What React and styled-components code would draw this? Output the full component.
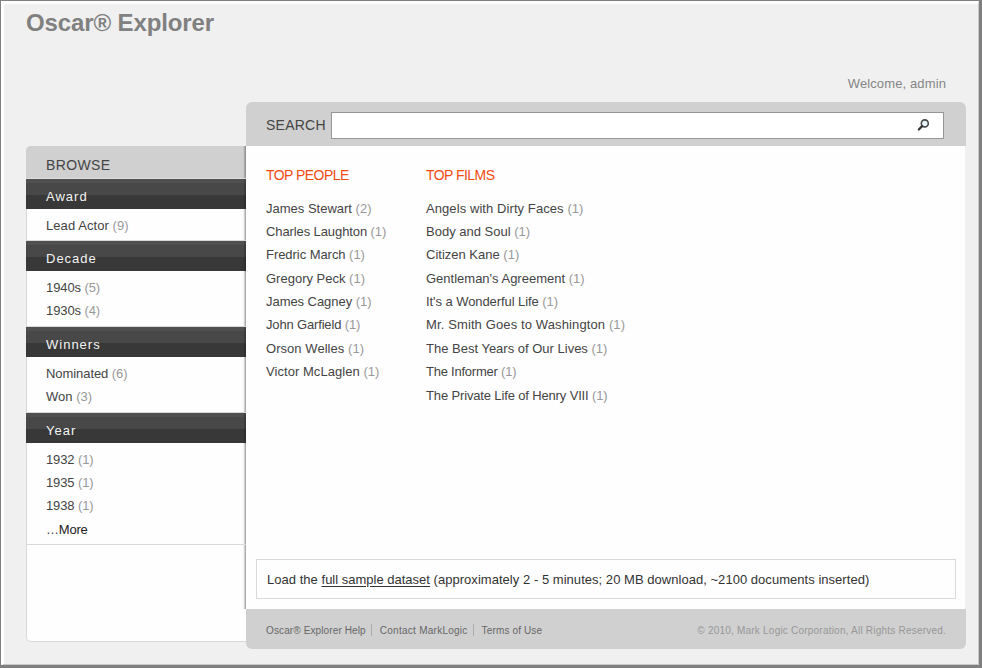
import React from "react";
import styled, { createGlobalStyle } from "styled-components";

const GlobalStyle = createGlobalStyle`
  *, *::before, *::after { box-sizing: border-box; }
  body { margin: 0; background: #f0f0f0; overflow: hidden; }
  ul { list-style: none; margin: 0; padding: 0; }
  h1, h2, p { margin: 0; font-weight: normal; }
`;

const Frame = styled.div`
  height: 668px;
  border: solid #808080;
  border-width: 1px 3px 3px 1px;
  font-family: "Liberation Sans", Arial, sans-serif;
  font-size: 13px;
  color: #444;
`;

const Page = styled.div`
  height: 664px;
  border: solid #fff;
  border-width: 3px 1px 1px 3px;
  border-right-color: #c8c8c8;
  border-bottom-color: #c8c8c8;
  background: #f0f0f0;
  padding-left: 22px;
`;

const Header = styled.header`
  height: 98px;
  width: 940px;
  display: flex;
  flex-direction: column;
  justify-content: space-between;
`;

const Title = styled.h1`
  font-size: 24px;
  line-height: 28px;
  margin-top: 5px;
  font-weight: bold;
  color: #808080;
  letter-spacing: -0.12px;
`;

const Welcome = styled.p`
  align-self: flex-end;
  margin: 0 20px 9px 0;
  line-height: 18px;
  letter-spacing: 0.12px;
  color: #858585;
`;

const Columns = styled.div`
  display: flex;
  width: 940px;
`;

const Sidebar = styled.aside`
  width: 220px;
  height: 496px;
  margin-top: 44px;
  border: 1px solid #d9d9d9;
  border-right: 0;
  border-top: 0;
  border-radius: 5px 0 0 5px;
  background: #fefefe;
`;

const SidebarShade = styled.div`
  height: 463px;
  margin-left: -1px;
  border-radius: 5px 0 0 0;
  overflow: hidden;
  background: linear-gradient(to right, transparent calc(100% - 3px), #e6e6e6 calc(100% - 2px), #969696);
`;

const Browse = styled.div`
  height: 33px;
  padding: 10px 20px 0;
  line-height: 18px;
  font-size: 14px;
  letter-spacing: 0.35px;
  background: linear-gradient(to right, #d0d0d0 calc(100% - 3px), #bbb calc(100% - 2px), #858585);
  border-bottom: 1px solid #dedede;
`;

const FacetTitle = styled.h2`
  height: 30px;
  padding: 9px 20px 0;
  font-size: 13px;
  line-height: 18px;
  letter-spacing: 1px;
  color: #f4f4f4;
  background:
    linear-gradient(to right, transparent calc(100% - 3px), rgba(0, 0, 0, 0.25)),
    linear-gradient(#505050 0, #505050 4px, #484848 4px, #484848 16px, #383838 16px);
`;

const FacetList = styled.ul`
  height: ${(p) => p.$height}px;
  margin-left: 1px;
  padding: 4.52px 0 0 19px;
  border-bottom: 1px solid #d9d9d9;
`;

const Item = styled.li`
  height: 23.39px;
  line-height: 23px;
  white-space: nowrap;
  letter-spacing: ${(p) => p.$track || 0}px;
`;

const Count = styled.span`
  color: #999;
`;

const More = styled.span`
  color: #222;
`;

const Main = styled.main`
  width: 720px;
  height: 547px;
  display: flex;
  flex-direction: column;
  border-radius: 6px;
  overflow: hidden;
`;

const SearchBar = styled.form`
  height: 44px;
  padding: 1px 22px 0 20px;
  display: flex;
  align-items: center;
  background: #d0d0d0;
`;

const SearchLabel = styled.label`
  width: 65px;
  font-size: 14px;
  letter-spacing: 0.25px;
`;

const SearchBox = styled.div`
  width: 613px;
  height: 27px;
  margin-top: 1px;
  display: flex;
  align-items: center;
  justify-content: flex-end;
  padding-right: 13px;
  border: 1px solid #969696;
  background: #fff;
`;

const SearchInput = styled.input`
  flex: 1;
  min-width: 0;
  border: 0;
  outline: 0;
  background: transparent;
  font: inherit;
`;

const Content = styled.div`
  height: 463px;
  margin-right: 1px;
  padding: 20px 9px 10px 10px;
  background: #fefefe;
  display: flex;
  flex-direction: column;
  justify-content: space-between;
`;

const Lists = styled.div`
  display: grid;
  grid-template-columns: 160px 240px;
  padding-left: 10px;
`;

const ListTitle = styled.h2`
  font-size: 14px;
  line-height: 18px;
  letter-spacing: -0.55px;
  margin-bottom: 12.52px;
  color: #f04b10;
`;

const Notice = styled.p`
  height: 40px;
  padding: 0 10px;
  border: 1px solid #dadada;
  line-height: 40px;
  letter-spacing: 0.035px;
  color: #333;
`;

const Link = styled.a`
  color: inherit;
  letter-spacing: 0;
  text-decoration: underline;
  text-underline-offset: 2px;
`;

const Footer = styled.footer`
  height: 40px;
  padding: 2px 20px 0;
  display: flex;
  align-items: center;
  background: #d0d0d0;
  font-size: 10px;
  color: #666;
`;

const FooterLink = styled.span`
  height: 12px;
  line-height: 13px;
  padding-right: ${(p) => (p.$last ? 0 : 5)}px;
  margin-right: ${(p) => (p.$last ? 0 : 8)}px;
  border-right: ${(p) => (p.$last ? "0" : "1px solid #aaa")};
  letter-spacing: ${(p) => p.$track || 0}px;
`;

const Copyright = styled.span`
  margin-left: auto;
  color: #979797;
  letter-spacing: 0.215px;
`;

const facets = [
  { name: "Award", height: 32, items: [["Lead Actor", 9, 0.07]] },
  { name: "Decade", height: 56, items: [["1940s", 5, -0.1], ["1930s", 4, -0.1]] },
  { name: "Winners", height: 56, items: [["Nominated", 6, -0.07], ["Won", 3]] },
  {
    name: "Year",
    height: 102,
    items: [["1932", 1, -0.12], ["1935", 1, -0.12], ["1938", 1, -0.12]],
    more: true,
  },
];

const people = [
  ["James Stewart", 2],
  ["Charles Laughton", 1, -0.1],
  ["Fredric March", 1, -0.05],
  ["Gregory Peck", 1],
  ["James Cagney", 1, -0.05],
  ["John Garfield", 1, -0.16],
  ["Orson Welles", 1, 0.05],
  ["Victor McLaglen", 1, 0.05],
];

const films = [
  ["Angels with Dirty Faces", 1, 0.08],
  ["Body and Soul", 1],
  ["Citizen Kane", 1],
  ["Gentleman's Agreement", 1],
  ["It's a Wonderful Life", 1, -0.07],
  ["Mr. Smith Goes to Washington", 1, 0.12],
  ["The Best Years of Our Lives", 1],
  ["The Informer", 1, -0.23],
  ["The Private Life of Henry VIII", 1, -0.145],
];

function Items({ rows }) {
  return rows.map(([name, count, track]) => (
    <Item key={name} $track={track}>
      {name} <Count>({count})</Count>
    </Item>
  ));
}

function SearchIcon() {
  return (
    <svg width="13" height="13" viewBox="0 0 13 13" fill="none" aria-label="Search">
      <circle cx="7.8" cy="4.4" r="3.5" fill="#e6f6fa" stroke="#484848" strokeWidth="1.6" />
      <path d="M5.2 7.1L1.8 10.5" stroke="#333" strokeWidth="2.2" strokeLinecap="round" />
    </svg>
  );
}

export default function App() {
  return (
    <Frame>
      <GlobalStyle />
      <Page>
        <Header>
          <Title>Oscar® Explorer</Title>
          <Welcome>Welcome, admin</Welcome>
        </Header>
        <Columns>
          <Sidebar>
            <SidebarShade>
              <Browse>BROWSE</Browse>
              {facets.map((f) => (
                <React.Fragment key={f.name}>
                  <FacetTitle>{f.name}</FacetTitle>
                  <FacetList $height={f.height}>
                    <Items rows={f.items} />
                    {f.more && (
                      <Item $track={-0.2}>
                        …<More>More</More>
                      </Item>
                    )}
                  </FacetList>
                </React.Fragment>
              ))}
            </SidebarShade>
          </Sidebar>
          <Main>
            <SearchBar>
              <SearchLabel htmlFor="q">SEARCH</SearchLabel>
              <SearchBox>
                <SearchInput id="q" />
                <SearchIcon />
              </SearchBox>
            </SearchBar>
            <Content>
              <Lists>
                <section>
                  <ListTitle>TOP PEOPLE</ListTitle>
                  <ul><Items rows={people} /></ul>
                </section>
                <section>
                  <ListTitle>TOP FILMS</ListTitle>
                  <ul><Items rows={films} /></ul>
                </section>
              </Lists>
              <Notice>
                Load the <Link>full sample dataset</Link> (approximately 2 - 5 minutes; 20 MB download, ~2100 documents inserted)
              </Notice>
            </Content>
            <Footer>
              <FooterLink $track={0.12}>Oscar® Explorer Help</FooterLink>
              <FooterLink $track={0.26}>Contact MarkLogic</FooterLink>
              <FooterLink $track={0.14} $last>Terms of Use</FooterLink>
              <Copyright>© 2010, Mark Logic Corporation, All Rights Reserved.</Copyright>
            </Footer>
          </Main>
        </Columns>
      </Page>
    </Frame>
  );
}
